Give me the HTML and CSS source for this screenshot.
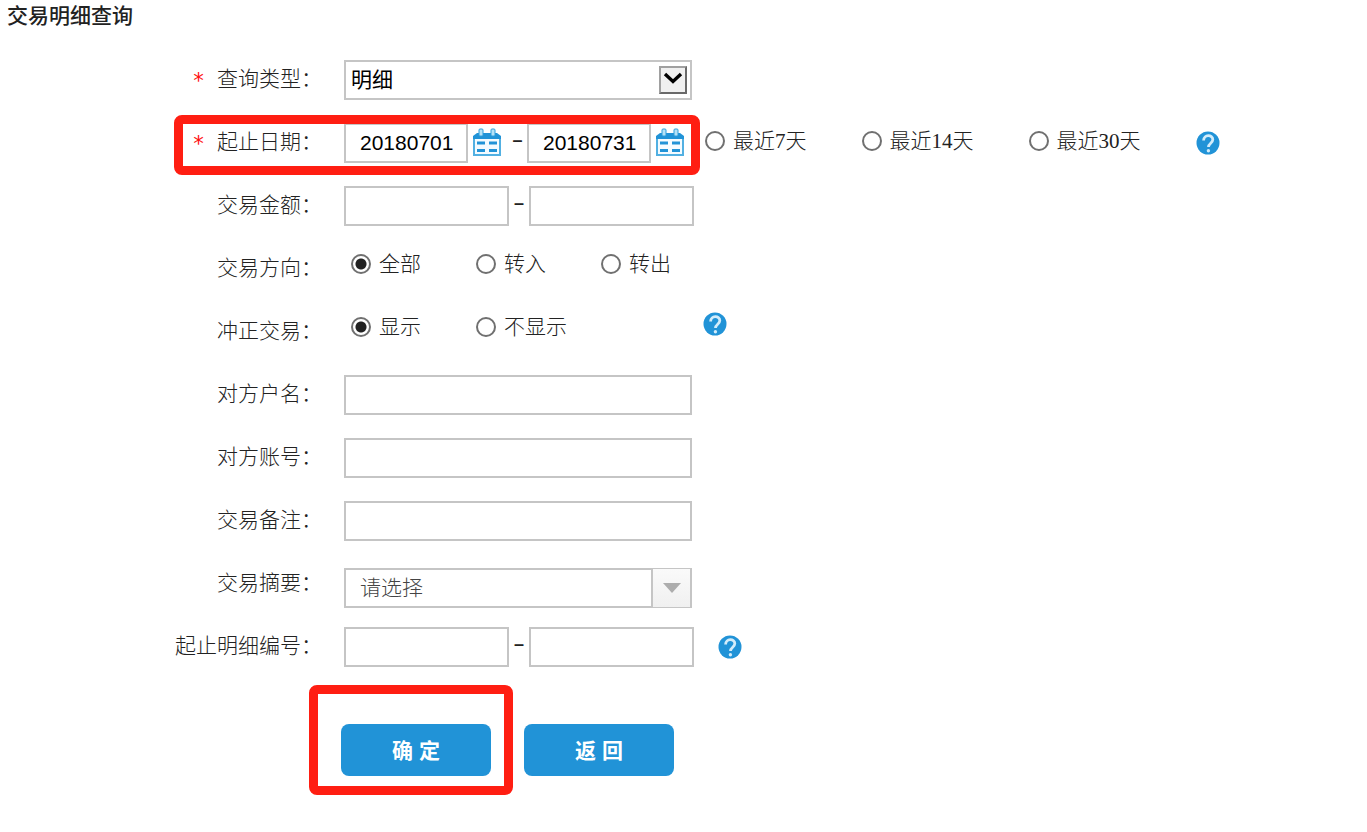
FILE: index.html
```
<!DOCTYPE html>
<html lang="zh-CN">
<head>
<meta charset="utf-8">
<title>交易明细查询</title>
<link rel="stylesheet" href="styles.css">
</head>
<body>
<svg class="defs" aria-hidden="true">
  <symbol id="calendar" viewBox="0 0 30 30">
    <path d="M2 9v18h26V9" fill="#f4fbff" stroke="#52b0e2" stroke-width="2"/>
    <path d="M1 8l4-3h20l4 3v3H1z" fill="#2193d7"/>
    <rect x="7" y="1" width="4" height="7" rx="1" fill="#b5e2f7" stroke="#2f9edb"/>
    <rect x="19" y="1" width="4" height="7" rx="1" fill="#b5e2f7" stroke="#2f9edb"/>
    <path d="M5 15h8M17 15h8M5 22.500h8M17 22.500h8" stroke="#2193d7" stroke-width="3"/>
  </symbol>
  <symbol id="help" viewBox="0 0 24 24">
    <circle cx="12" cy="12" r="11.500" fill="#2193d7"/>
    <path d="M7.600 9.500C7.600 3.200 16.800 3.200 16.800 8.600c0 3.600-4.300 3.600-4.300 7.400" fill="none" stroke="#d3ecfa" stroke-width="2.800"/>
    <circle cx="12.400" cy="19.700" r="1.700" fill="#d3ecfa"/>
  </symbol>
</svg>
<h1 class="title">交易明细查询</h1>
<form class="form">
  <div class="row">
    <label class="name" for="type"><span class="star">*</span>查询类型：</label>
    <div class="field">
      <div class="picker">
        <select class="box wide" id="type"><option>明细</option></select>
        <svg class="arrow-box" viewBox="0 0 28 28" aria-hidden="true">
          <path d="M0 0h28v28H0z" fill="#a0a0a0"/><path d="M28 0v28H0l2-2h24V2z" fill="#696969"/>
          <path d="M2 2h24v24H2z" fill="#f0f0f0"/>
          <path d="M6 8l8 7.500L22 8" fill="none" stroke="#000" stroke-width="3.400"/>
        </svg>
      </div>
    </div>
  </div>
  <div class="row marked">
    <label class="name" for="from"><span class="star">*</span>起止日期：</label>
    <div class="field">
      <input class="box date" id="from" value="20180701">
      <button class="cal" type="button" aria-label="选择起始日期"><svg><use href="#calendar"/></svg></button>
      <span class="dash date-dash">–</span>
      <input class="box date" id="to" aria-label="截止日期" value="20180731">
      <button class="cal" type="button" aria-label="选择截止日期"><svg><use href="#calendar"/></svg></button>
      <div class="choices recent">
        <label class="choice"><input type="radio" name="recent">最近7天</label>
        <label class="choice"><input type="radio" name="recent">最近14天</label>
        <label class="choice"><input type="radio" name="recent">最近30天</label>
        <svg class="help" role="img" aria-label="帮助"><use href="#help"/></svg>
      </div>
    </div>
  </div>
  <div class="row">
    <label class="name" for="min">交易金额：</label>
    <div class="field">
      <input class="box half" id="min"><span class="dash">–</span><input class="box half" aria-label="最高金额">
    </div>
  </div>
  <div class="row">
    <span class="name">交易方向：</span>
    <div class="field choices upper" role="radiogroup" aria-label="交易方向">
      <label class="choice"><input type="radio" name="direction" checked>全部</label>
      <label class="choice"><input type="radio" name="direction">转入</label>
      <label class="choice"><input type="radio" name="direction">转出</label>
    </div>
  </div>
  <div class="row">
    <span class="name">冲正交易：</span>
    <div class="field choices upper" role="radiogroup" aria-label="冲正交易">
      <label class="choice"><input type="radio" name="reversal" checked>显示</label>
      <label class="choice"><input type="radio" name="reversal">不显示</label>
      <svg class="help help-far" role="img" aria-label="帮助"><use href="#help"/></svg>
    </div>
  </div>
  <div class="row">
    <label class="name" for="payee">对方户名：</label>
    <div class="field"><input class="box wide" id="payee"></div>
  </div>
  <div class="row">
    <label class="name" for="account">对方账号：</label>
    <div class="field"><input class="box wide" id="account"></div>
  </div>
  <div class="row">
    <label class="name" for="note">交易备注：</label>
    <div class="field"><input class="box wide" id="note"></div>
  </div>
  <div class="row">
    <label class="name" for="summary">交易摘要：</label>
    <div class="field summary">
      <div class="picker">
        <select class="box wide muted" id="summary"><option>请选择</option></select>
        <span class="drop" aria-hidden="true"></span>
      </div>
    </div>
  </div>
  <div class="row">
    <label class="name" for="first">起止明细编号：</label>
    <div class="field">
      <input class="box half" id="first"><span class="dash">–</span><input class="box half" aria-label="截止编号">
      <svg class="help help-near" role="img" aria-label="帮助"><use href="#help"/></svg>
    </div>
  </div>
  <div class="actions">
    <div class="confirm"><button class="btn" type="submit">确 定</button></div>
    <button class="btn" type="button">返 回</button>
  </div>
</form>
</body>
</html>
```
FILE: styles.css
```
*, *::before, *::after { box-sizing: border-box; }
body {
  margin: 0;
  background: #fff;
  color: #222;
  font: 300 21px/30px "Liberation Serif", "Noto Sans CJK SC", serif;
}
.defs { position: absolute; width: 0; height: 0; }
.title { margin: 0; padding: 1px 7px 29px; font-size: 21px; line-height: 30px; font-weight: 500; }
.form { display: flex; flex-direction: column; gap: 23px; }
.row {
  display: grid;
  grid-template-columns: 322px 1fr;
  grid-template-rows: 40px;
  column-gap: 22px;
  align-items: center;
  position: relative;
}
.name { display: flex; justify-content: flex-end; align-items: center; padding-bottom: 2px; white-space: nowrap; }
.star { margin-right: 12px; color: #ff1010; font: 400 21px/26px "DejaVu Sans Mono", monospace; padding-top: 4px; }
.field { display: flex; align-items: center; }
.box {
  height: 40px;
  margin: 0;
  border: 2px solid #c5c5c5;
  border-radius: 0;
  background: #fff;
  color: #000;
  padding: 0 5px;
  font: 400 21px/30px "Liberation Sans", "Noto Sans CJK SC", sans-serif;
}
select.box { appearance: none; opacity: 1; }
.wide { width: 348px; }
.half { width: 165px; }
.date { width: 124px; padding: 0 0 0 14px; }
.box.muted { color: #444; padding-left: 14px; font-weight: 300; }
.picker { position: relative; }
.arrow-box { position: absolute; right: 5px; top: 6px; width: 28px; height: 28px; pointer-events: none; }
.drop {
  position: absolute;
  right: 0;
  top: 0;
  width: 41px;
  height: 40px;
  border: 2px solid #c5c5c5;
  border-width: 1px 2px 1px 2px;
  background: linear-gradient(#fafafa, #f0f0f0);
  display: grid;
  place-items: center;
  pointer-events: none;
}
.drop::after { content: ""; border: solid transparent; border-width: 10px 9px 0; border-top-color: #adadad; }
.cal { border: 0; padding: 0; background: none; width: 30px; height: 30px; margin: 0 4px; }
.cal svg { display: block; width: 30px; height: 30px; }
.dash { width: 20px; text-align: center; padding-bottom: 6px; font: 700 18px/30px "Liberation Sans", sans-serif; }
.date-dash { width: 21px; padding-left: 2px; }
.choices { display: flex; align-items: center; gap: 55px; }
.choice { display: flex; align-items: center; gap: 8px; white-space: nowrap; }
.choice input {
  appearance: none;
  margin: 0;
  width: 20px;
  height: 20px;
  border: 2px solid #707070;
  border-radius: 50%;
  background: #fff;
}
.choice input:checked { background: radial-gradient(circle, #222 5px, #fff 6px); }
.recent { margin-left: 16px; }
.recent .choice { padding-bottom: 4px; }
.upper { align-self: start; padding-left: 7px; }
.help { flex: none; width: 24px; height: 24px; }
.help-near { margin-left: 24px; }
.help-far { margin-left: 81px; margin-bottom: 6px; }
.summary { padding-top: 8px; }
.marked::after {
  content: "";
  position: absolute;
  left: 174px;
  top: -8px;
  width: 526px;
  height: 60px;
  border: 9px solid #ff1e12;
  border-radius: 8px;
  pointer-events: none;
}
.actions { display: flex; gap: 33px; padding: 34px 0 34px 341px; }
.confirm { position: relative; }
.confirm::before {
  content: "";
  position: absolute;
  inset: -39px -22px -19px -32px;
  border: 9px solid #ff1e12;
  border-radius: 8px;
  pointer-events: none;
}
.btn {
  width: 150px;
  height: 52px;
  border: 0;
  border-radius: 8px;
  padding: 2px 0 0;
  background: #2193d7;
  color: #fff;
  font: 700 21px/30px "Liberation Sans", "Noto Sans CJK SC", sans-serif;
}
```
